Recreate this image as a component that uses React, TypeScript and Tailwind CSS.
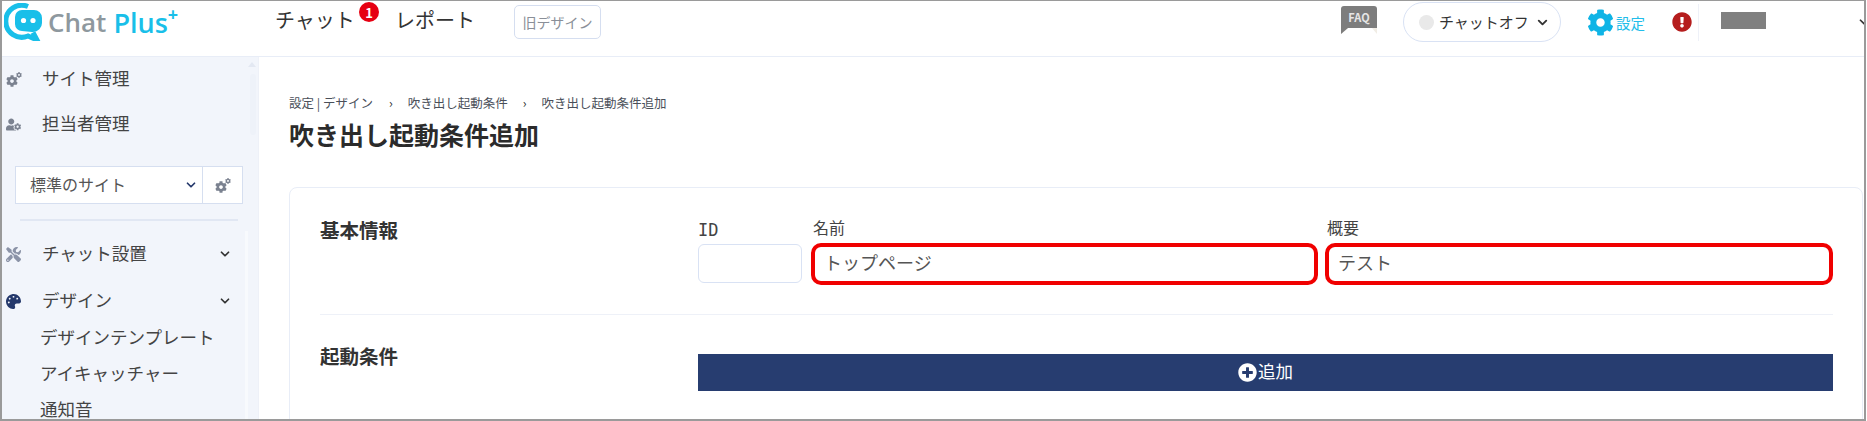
import { ChevronDown } from 'lucide-react';
import { FaCog, FaExclamationCircle, FaPalette, FaPlusCircle, FaTools, FaUserCog } from 'react-icons/fa';

const JP = { fontFamily: '"Noto Sans CJK JP", "Noto Sans", sans-serif' };

function Logo() {
  return (
    <div className="flex items-center pl-[2px]">
      <svg viewBox="0 0 38 38" className="h-[38px] w-[38px]">
        <path d="M24 3.5 A16 16 0 1 0 24 33 L33 37 L29 29.5" fill="none" stroke="#19bfe9" strokeWidth="5" />
        <path d="M18 7h12a8 8 0 0 1 8 8v5a9 9 0 0 1-9 9l-1 0-10-1a7 7 0 0 1-7-7v-7a7 7 0 0 1 7-7z" fill="#19bfe9" />
        <circle cx="19.5" cy="17.5" r="2.6" fill="#fff" />
        <circle cx="29" cy="17.5" r="2.6" fill="#fff" />
      </svg>
      <div className="ml-[6px] flex items-start whitespace-nowrap font-['Open_Sans'] text-[26px] font-semibold leading-none">
        <span className="text-[#8e989e]">Chat</span>
        <span className="ml-[7px] text-[27px] text-[#19bfe9]">Plus</span>
        <span className="-mt-[4px] text-[18px] font-bold text-[#19bfe9]">+</span>
      </div>
    </div>
  );
}

// big cog with a small one at its upper right
function Cogs({ className }: { className: string }) {
  return (
    <span className={`relative inline-block h-[15px] w-[16px] ${className}`}>
      <FaCog className="absolute bottom-0 left-0 h-[12px] w-[12px]" />
      <FaCog className="absolute right-0 top-0 h-[6px] w-[6px]" />
    </span>
  );
}

function Header() {
  return (
    <header className="flex h-[56px] shrink-0 items-start overflow-hidden border-b border-[#e8edf7] bg-white [&>*]:shrink-0" style={JP}>
      <div className="flex h-[42px] w-[273px] items-center">
        <Logo />
      </div>
      <nav className="flex h-[38px] items-center text-[20px] text-[#333]">
        <span className="relative w-[120px]">
          チャット
          <span className="absolute left-[84px] -top-[3px] flex h-[20px] w-[20px] items-center justify-center rounded-full bg-[#e60012] text-[13px] font-bold leading-none text-white">
            1
          </span>
        </span>
        <span className="w-[119px]">レポート</span>
      </nav>
      <div className="mt-[4px] flex h-[34px] w-[87px] items-center justify-center rounded-[5px] border border-[#d5def0] text-[14px] text-[#8a8f98]">
        旧デザイン
      </div>

      <div className="ml-[740px] mt-[5px] flex flex-col">
        <div className="flex h-[22px] w-[36px] items-center justify-center rounded-t-[3px] bg-[#7d7d7d] text-[11px] font-bold text-[#e6e6e6]">
          FAQ
        </div>
        <svg viewBox="0 0 36 6" className="h-[6px] w-[36px]">
          <polygon points="0,0 36,0 36,6 31,0 7,0 0,6" fill="#f1ede5" />
          <polygon points="0,0 7,0 0,6" fill="#7d7d7d" />
        </svg>
      </div>

      <button className="ml-[26px] mt-[1px] flex h-[40px] w-[158px] items-center rounded-[20px] border border-[#d9e2f4] pl-[15px] text-[15px] text-[#333]">
        <span className="mr-[5px] h-[15px] w-[15px] rounded-full bg-[#e9e9e9]" />
        チャットオフ
        <ChevronDown className="ml-[6px] h-[15px] w-[15px] text-[#333]" strokeWidth={3} />
      </button>

      <div className="ml-[26px] mt-[8px] flex h-[27px] items-center whitespace-nowrap text-[14.5px] text-[#22bdea]">
        <FaCog className="h-[27px] w-[27px] text-[#0fb4e6]" />
        <span className="ml-[2px]">設定</span>
      </div>

      <FaExclamationCircle className="ml-[27px] mt-[11px] h-[20px] w-[20px] text-[#b51d1d]" />
      <div className="ml-[6px] mt-[3px] h-[37px] w-px bg-[#eef1f8]" />
      <div className="ml-[22px] mt-[11px] h-[17px] w-[45px] bg-[#808080]" />
      <ChevronDown className="ml-[91px] mt-[14px] h-[14px] w-[14px] text-[#333]" strokeWidth={3} />
    </header>
  );
}

function NavRow({ icon, label, chevron, tall }: { icon: React.ReactNode; label: string; chevron?: boolean; tall?: boolean }) {
  return (
    <div className={`flex items-center text-[17.5px] text-[#444] ${tall ? 'h-[45px]' : 'h-[36px]'}`}>
      <span className="flex w-[40px] shrink-0 justify-start pl-[4px]">{icon}</span>
      <span className="pb-[2px]">{label}</span>
      {chevron && <ChevronDown className="ml-auto mr-[13px] h-[14px] w-[14px] text-[#333]" strokeWidth={3} />}
    </div>
  );
}

function Sidebar() {
  return (
    <aside className="flex h-full w-[256px] shrink-0 bg-[#f2f5fb]" style={JP}>
      <div className="w-[243px] shrink-0">
        <NavRow tall icon={<Cogs className="text-[#7b8290]" />} label="サイト管理" />
        <NavRow tall icon={<FaUserCog className="h-[15px] w-[15px] text-[#7b8290]" />} label="担当者管理" />

        <div className="ml-[13px] mt-[19px] flex h-[38px] w-[228px] border border-[#d6dff0] bg-white text-[16px] text-[#555]">
          <div className="flex w-[187px] items-center border-r border-[#d6dff0] pl-[14px]">
            <span className="pb-[2px]">標準のサイト</span>
            <ChevronDown className="ml-auto mr-[4px] h-[14px] w-[14px] text-[#24386b]" strokeWidth={3} />
          </div>
          <div className="flex flex-1 items-center justify-center">
            <Cogs className="text-[#7b8290]" />
          </div>
        </div>

        <div className="ml-[18px] mt-[15px] h-[2px] w-[218px] bg-[#e1e7f3]" />

        <div className="mt-[15px]">
          <NavRow icon={<FaTools className="h-[15px] w-[15px] text-[#8b93a7]" />} label="チャット設置" chevron />
        </div>
        <div className="mt-[11px]">
          <NavRow icon={<FaPalette className="h-[15px] w-[15px] text-[#24386b]" />} label="デザイン" chevron />
        </div>
        {['デザインテンプレート', 'アイキャッチャー', '通知音'].map((t) => (
          <div key={t} className="flex h-[36px] items-center whitespace-nowrap pl-[38px] text-[17.5px] text-[#444]">
            {t}
          </div>
        ))}
      </div>
      <div className="flex w-[13px] flex-col">
        <div className="mx-auto mt-[5px] h-0 w-0 border-x-[4px] border-b-[5px] border-x-transparent border-b-[#e3e8f2]" />
        <div className="ml-[5px] mt-[7px] h-[62px] w-[6px] rounded-full bg-[#eef2f9]" />
        <div className="mt-[96px] h-[190px] w-[3px] bg-[#f8fafd]" />
      </div>
    </aside>
  );
}

function TextField({ label, value, width }: { label: string; value: string; width: string }) {
  return (
    <div className={`flex flex-col ${width}`}>
      <label className="h-[26px] pl-[2px] text-[16px] leading-[20px] text-[#444]">{label}</label>
      <div className="flex h-[42px] items-center rounded-[10px] border-4 border-[#f00000] bg-white pb-[3px] pl-[9px] text-[18px] text-[#555]">
        {value}
      </div>
    </div>
  );
}

function MainPanel() {
  return (
    <main className="min-w-0 flex-1 border-l border-[#eef1f8] bg-white pl-[30px] pr-[1px]" style={JP}>
      <div className="flex h-[51px] items-end text-[12.5px] leading-none text-[#4a4f59]">
        <span className="mb-[-1px]">設定 | デザイン</span>
        <span className="mb-[-1px] ml-[16px] text-[#222]">›</span>
        <span className="mb-[-1px] ml-[15px]">吹き出し起動条件</span>
        <span className="mb-[-1px] ml-[15px] text-[#222]">›</span>
        <span className="mb-[-1px] ml-[15px]">吹き出し起動条件追加</span>
      </div>
      <h1 className="mt-[8px] text-[25px] font-bold leading-[36px] text-[#2b2b2b]">吹き出し起動条件追加</h1>

      <section className="mt-[35px] h-[300px] rounded-t-[8px] border border-[#e8edf7] pl-[30px] pr-[29px] pt-[29px]">
        <div className="flex h-[98px] border-b border-[#eef1f8]">
          <h2 className="-mt-[2px] w-[378px] shrink-0 text-[19.5px] font-bold leading-[30px] text-[#333]">基本情報</h2>
          <div className="flex items-start">
            <div className="flex w-[113px] flex-col">
              <label className="h-[27px] font-['DejaVu_Sans_Mono'] text-[17px] leading-[26px] text-[#444]">ID</label>
              <div className="h-[39px] w-[104px] rounded-[6px] border border-[#d9e2f4] bg-white" />
            </div>
            <TextField label="名前" value="トップページ" width="w-[507px]" />
            <div className="w-[7px]" />
            <TextField label="概要" value="テスト" width="w-[508px]" />
          </div>
        </div>
        <div className="flex pt-[39px]">
          <h2 className="-mt-[13px] w-[378px] shrink-0 text-[19.5px] font-bold leading-[30px] text-[#333]">起動条件</h2>
          <button className="flex h-[37px] flex-1 items-center justify-center bg-[#273d70] text-[17.5px] text-white">
            <FaPlusCircle className="mr-[1px] h-[19px] w-[19px]" />
            <span className="pb-[2px]">追加</span>
          </button>
        </div>
      </section>
    </main>
  );
}

export default function App() {
  return (
    <div className="flex h-[421px] w-[1867px] flex-col overflow-hidden bg-white">
      <div className="flex h-full w-[1866px] flex-col overflow-hidden border-x-2 border-t border-b-2 border-[#9a9a9a]">
        <Header />
        <div className="flex min-h-0 flex-1">
          <Sidebar />
          <MainPanel />
        </div>
      </div>
    </div>
  );
}
